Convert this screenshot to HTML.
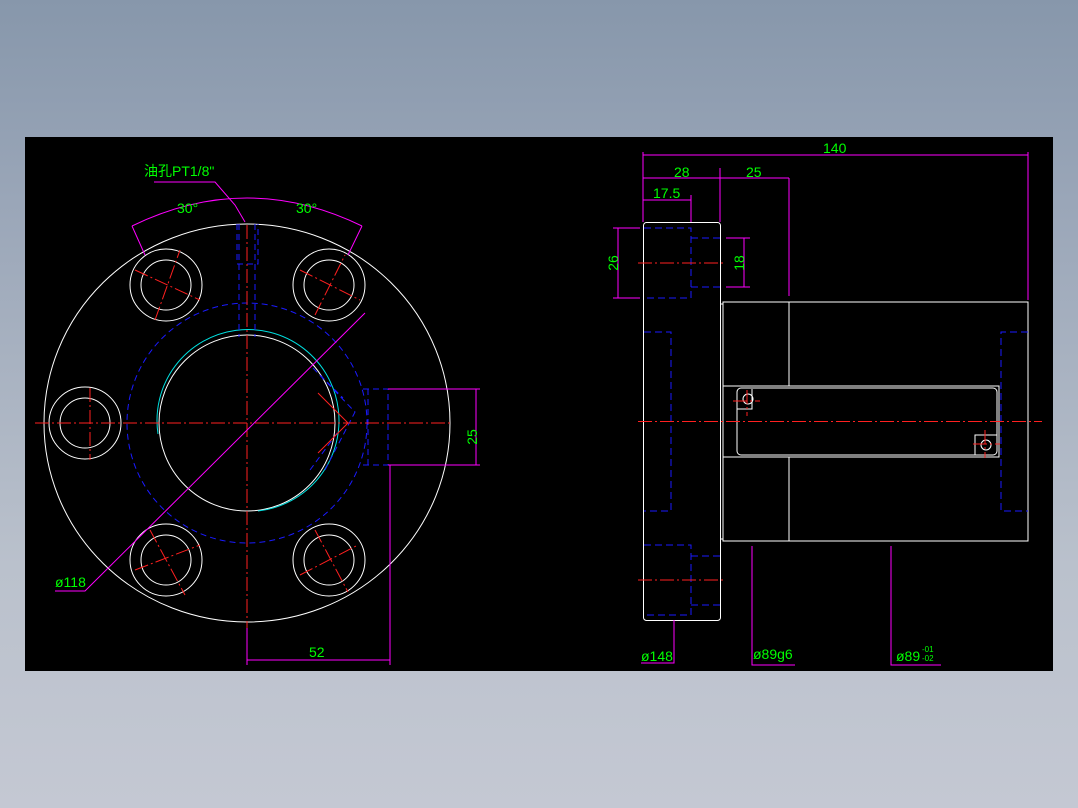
<!DOCTYPE html>
<html><head><meta charset="utf-8"><style>
html,body{margin:0;padding:0;width:1078px;height:808px;overflow:hidden;background:linear-gradient(#8797ab,#9aa6b8 25%,#bac1cc 70%,#c4c8d3);}
svg{position:absolute;left:0;top:0}
text{font-family:"Liberation Sans","Noto Sans CJK SC",sans-serif;fill:#00ff00;font-size:14px}
</style></head><body>
<svg width="1078" height="808" viewBox="0 0 1078 808">
<rect x="25" y="137" width="1028" height="534" fill="#000"/>
<g fill="none" stroke-width="1">
<g stroke="#fff">
<ellipse cx="247" cy="423" rx="203" ry="199"/>
<circle cx="247" cy="423" r="88"/>
<circle cx="166" cy="285" r="36"/><circle cx="166" cy="285" r="25"/>
<circle cx="329" cy="285" r="36"/><circle cx="329" cy="285" r="25"/>
<circle cx="85" cy="423" r="36"/><circle cx="85" cy="423" r="25"/>
<circle cx="166" cy="560" r="36"/><circle cx="166" cy="560" r="25"/>
<circle cx="329" cy="560" r="36"/><circle cx="329" cy="560" r="25"/>
</g>
<path d="M158 434 A91 91 0 1 1 258 511" stroke="#00e0e0"/>
<g stroke="#1a1aff" stroke-dasharray="6,4">
<circle cx="247" cy="423" r="120"/>
<path d="M239 224 V337 M255 224 V337 M237 224 V264 H258 V224"/>
<path d="M363 389 H388 V465 H363 M368 389 V465"/>
<path d="M313 368 L355 412 L325 470 M320 375 L343 398 M310 470 L338 432"/>
</g>
<g stroke="#ff2020" stroke-dasharray="14,3,2,3">
<path d="M35 423 H450 M247 225 V628"/>
<path d="M135 270 L200 300 M155 320 L180 250 M300 270 L360 300 M315 315 L345 255"/>
<path d="M135 570 L200 545 M150 530 L185 595 M300 575 L358 545 M315 530 L348 592"/>
<path d="M90 388 V460"/>
</g>
<path d="M318 393 L348 423 L318 453" stroke="#ff2020"/>
<g stroke="#ff00ff">
<path d="M154 182 H215 L235 205 L245 222"/>
<path d="M132 226 Q247 170 362 226"/>
<path d="M132 226 L145 255 M362 226 L348 255"/>
<path d="M55 591 H85 L365 313"/>
<path d="M388 389 H480 M388 465 H480 M476 389 V465"/>
<path d="M247 628 V665 M390 465 V665 M247 660 H390"/>
</g>
<g stroke="#fff">
<rect x="643.5" y="222.5" width="77" height="398" rx="3"/>
<rect x="723" y="302" width="305" height="239"/>
<path d="M720.5 304 H723 M720.5 539 H723"/>
<path d="M789 302 V386 M789 457 V541"/>
<rect x="723" y="386" width="276" height="71"/>
<rect x="737" y="388" width="260" height="67" rx="4"/>
<circle cx="748" cy="399" r="5"/><path d="M737 409 H752 V389"/>
<circle cx="986" cy="445" r="5"/><path d="M975 455 V435 H997"/>
</g>
<g stroke="#1a1aff" stroke-dasharray="7,4">
<path d="M644 228 H691 V298 H644 M691 238 H720 M691 287 H720"/>
<path d="M644 332 H671 V511 H644"/>
<path d="M1028 332 H1001 V511 H1028"/>
<path d="M644 545 H691 V615 H644 M691 556 H720 M691 605 H720"/>
</g>
<g stroke="#ff2020" stroke-dasharray="14,3,2,3">
<path d="M638 421.5 H1042 M638 263 H725 M638 580 H725"/>
<path d="M733 401 H760 M747 390 V416 M973 444 H1000 M985 430 V458"/>
</g>
<g stroke="#ff00ff">
<path d="M643 152 V222 M1028 152 V300 M643 155 H1028"/>
<path d="M720 168 V222 M789 178 V296 M643 178 H789"/>
<path d="M691 195 V222 M643 200 H691"/>
<path d="M613 228 H640 M613 298 H640 M618 228 V298"/>
<path d="M726 238 H750 M726 287 H750 M744 238 V287"/>
<path d="M674 620 V663 H641 M752 546 V665 H795 M891 546 V665 H941"/>
</g>
</g>
<text x="144" y="176">油孔PT1/8"</text>
<text x="177" y="213">30°</text>
<text x="296" y="213">30°</text>
<text x="55" y="587">ø118</text>
<text x="309" y="657">52</text>
<text x="472" y="437" transform="rotate(-90 472 437)" text-anchor="middle" dy="5">25</text>
<text x="823" y="153">140</text>
<text x="674" y="177">28</text>
<text x="746" y="177">25</text>
<text x="653" y="198">17.5</text>
<text x="613" y="263" transform="rotate(-90 613 263)" text-anchor="middle" dy="5">26</text>
<text x="739" y="263" transform="rotate(-90 739 263)" text-anchor="middle" dy="5">18</text>
<text x="641" y="661">ø148</text>
<text x="753" y="659">ø89g6</text>
<text x="896" y="661">ø89</text><text x="922" y="652" style="font-size:8px">-01</text><text x="922" y="661" style="font-size:8px">-02</text>
</svg>
</body></html>
